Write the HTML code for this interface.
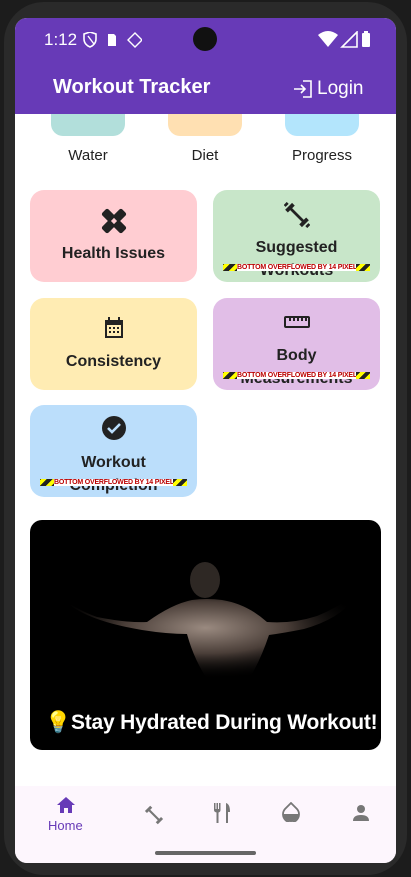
<!DOCTYPE html>
<html><head><meta charset="utf-8"><style>
*{margin:0;padding:0;box-sizing:border-box}
body{width:411px;height:877px;background:#1c1c1c;position:relative;overflow:hidden;font-family:"Liberation Sans",sans-serif}
.abs{position:absolute}
.screen{left:15px;top:18px;width:381px;height:845px;background:#fff;border-radius:12px;overflow:hidden}
.card{position:absolute;border-radius:14px;overflow:hidden;text-align:center;color:#222;font-weight:bold;font-size:16px}
.card svg{position:absolute;left:50%;transform:translateX(-50%)}
.lbl{position:absolute;left:0;right:0;text-align:center}
.of{position:absolute;height:7px;left:10px;right:10px;background:repeating-linear-gradient(-45deg,#ff0 0 4px,#222 4px 8px)}
.of span{position:absolute;left:14px;right:14px;top:0;height:7px;background:#fff;color:#b00;font-size:7px;line-height:7px;font-weight:bold;white-space:nowrap;overflow:hidden;font-family:"Liberation Sans Narrow","Liberation Sans",sans-serif;letter-spacing:-0.2px;text-align:center}
.tl{position:absolute;font-size:15px;color:#222;text-align:center;width:100px}
</style></head><body>
<div class="abs" style="left:4px;top:2px;width:403px;height:873px;border-radius:40px;background:#2a2a2a"></div>
<div class="abs screen">
 <div class="abs" style="left:0;top:0;width:381px;height:96px;background:#673ab7"></div>
 <div class="abs" style="left:29px;top:12px;color:#fff;font-size:17px">1:12</div>
 <svg class="abs" style="left:67px;top:14px" width="60" height="16" viewBox="0 0 60 16"><path d="M2 2l6-2 6 2v5c0 4-3 7-6 8-3-1-6-4-6-8z" fill="none" stroke="#fff" stroke-width="1.6"/><path d="M6 4l6 8" stroke="#fff" stroke-width="1.4"/><path d="M26 2h6l2 2v10h-8z" fill="#fff"/><path d="M53 1l7 7-7 7-7-7z" fill="none" stroke="#fff" stroke-width="1.4"/></svg>
 <div class="abs" style="left:178px;top:9px;width:24px;height:24px;border-radius:50%;background:#111"></div>
 <svg class="abs" style="left:303px;top:13px" width="66" height="18" viewBox="0 0 66 18"><path d="M0 4q10-8 20 0l-10 12z" fill="#fff"/><path d="M24 16h15V1z" fill="none" stroke="#fff" stroke-width="1.6"/><rect x="44" y="2" width="8" height="14" rx="1" fill="#fff"/><rect x="46" y="0" width="4" height="2" fill="#fff"/></svg>
 <div class="abs" style="left:38px;top:58px;color:#fff;font-size:20px;font-weight:bold">Workout Tracker</div>
 <svg class="abs" style="left:278px;top:62px" width="20" height="18" viewBox="0 0 20 18" fill="none" stroke="#fff" stroke-width="1.6"><path d="M1 9h11M8 5l4 4-4 4M10 1h8v16h-8"/></svg>
 <div class="abs" style="left:302px;top:60px;color:#fff;font-size:19px">Login</div>
 <div class="abs" style="left:36px;top:96px;width:74px;height:22px;background:#b2dfdb;border-radius:0 0 12px 12px"></div>
 <div class="abs" style="left:153px;top:96px;width:74px;height:22px;background:#ffe0b2;border-radius:0 0 12px 12px"></div>
 <div class="abs" style="left:270px;top:96px;width:74px;height:22px;background:#b3e5fc;border-radius:0 0 12px 12px"></div>
 <div class="tl" style="left:23px;top:129px">Water</div>
 <div class="tl" style="left:140px;top:129px">Diet</div>
 <div class="tl" style="left:257px;top:129px">Progress</div>

 <div class="card" style="left:15px;top:172px;width:167px;height:92px;background:#ffcdd2">
  <svg style="top:18px" width="26" height="26" viewBox="0 0 24 24" fill="#222"><rect x="8" y="-1" width="8" height="26" rx="2" transform="rotate(45 12 12)"/><rect x="8" y="-1" width="8" height="26" rx="2" transform="rotate(-45 12 12)"/><rect x="10" y="10" width="4" height="4" fill="#ffcdd2" transform="rotate(45 12 12)"/></svg>
  <div class="lbl" style="top:55px">Health Issues</div></div>
 <div class="card" style="left:198px;top:172px;width:167px;height:92px;background:#c8e6c9">
  <svg style="top:12px" width="26" height="26" viewBox="0 0 24 24" fill="#222"><path d="M6 6l12 12" stroke="#222" stroke-width="2.5"/><rect x="1" y="3.5" width="9" height="3.5" transform="rotate(-45 5.5 5.25)"/><rect x="14" y="17" width="9" height="3.5" transform="rotate(-45 18.5 18.75)"/><rect x="0" y="1" width="4" height="2.5" transform="rotate(-45 2 2.25)"/><rect x="20" y="20.5" width="4" height="2.5" transform="rotate(-45 22 21.75)"/></svg>
  <div class="lbl" style="top:49px">Suggested</div><div class="lbl" style="top:72px">Workouts</div>
  <div class="of" style="top:74px"><span>BOTTOM OVERFLOWED BY 14 PIXELS</span></div></div>
 <div class="card" style="left:15px;top:280px;width:167px;height:92px;background:#ffecb3">
  <svg style="top:18px" width="24" height="24" viewBox="0 0 24 24" fill="#222"><path d="M3 4h18v18H3z"/><rect x="6" y="1" width="2" height="4"/><rect x="16" y="1" width="2" height="4"/><rect x="5" y="9" width="14" height="11" fill="#ffecb3"/><g fill="#222"><rect x="7" y="11" width="2" height="2"/><rect x="11" y="11" width="2" height="2"/><rect x="15" y="11" width="2" height="2"/><rect x="7" y="15" width="2" height="2"/><rect x="11" y="15" width="2" height="2"/><rect x="15" y="15" width="2" height="2"/></g></svg>
  <div class="lbl" style="top:55px">Consistency</div></div>
 <div class="card" style="left:198px;top:280px;width:167px;height:92px;background:#e1bee7">
  <svg style="top:12px" width="28" height="24" viewBox="0 0 28 24" fill="none" stroke="#222" stroke-width="2"><rect x="2" y="7" width="24" height="10" rx="1"/><path d="M7 7v4M11 7v4M15 7v4M19 7v4M23 7v4"/></svg>
  <div class="lbl" style="top:49px">Body</div><div class="lbl" style="top:72px">Measurements</div>
  <div class="of" style="top:74px"><span>BOTTOM OVERFLOWED BY 14 PIXELS</span></div></div>
 <div class="card" style="left:15px;top:387px;width:167px;height:92px;background:#bbdefb">
  <svg style="top:11px" width="24" height="24" viewBox="0 0 24 24"><circle cx="12" cy="12" r="12" fill="#222"/><path d="M6 12l4 4 8-8" fill="none" stroke="#bbdefb" stroke-width="2.6"/></svg>
  <div class="lbl" style="top:49px">Workout</div><div class="lbl" style="top:72px">Completion</div>
  <div class="of" style="top:74px"><span>BOTTOM OVERFLOWED BY 14 PIXELS</span></div></div>

 <div class="abs" style="left:15px;top:502px;width:351px;height:230px;background:#000;border-radius:12px;overflow:hidden">
  <svg width="351" height="230" viewBox="0 0 351 230"><defs><radialGradient id="g" cx="0.5" cy="0.35" r="0.55"><stop offset="0" stop-color="#9a8a80"/><stop offset="0.5" stop-color="#4a3e38"/><stop offset="1" stop-color="#000" stop-opacity="0"/></radialGradient></defs>
  <ellipse cx="175" cy="60" rx="15" ry="18" fill="#2e2824"/>
  <path d="M27 75q20 15 40 22q30 6 50 5q25-18 45-22q15-2 30 0q25 4 45 22q25 2 50-6q20-8 35-20l2 3q-15 20-50 30q-20 4-35 6q-10 30-25 52q-20 5-35-5q-15-22-22-48q-20 0-45-4q-60-10-80-32z" fill="url(#g)"/>
  </svg>
  <div class="abs" style="left:15px;top:186px;color:#fff;font-size:21px;font-weight:bold;white-space:nowrap;letter-spacing:-0.2px"><span style="font-family:'Noto Sans CJK SC',sans-serif">💡</span>Stay Hydrated During Workout!</div>
 </div>

 <div class="abs" style="left:0;top:768px;width:381px;height:77px;background:#fdf6fd"></div>
 <svg class="abs" style="left:42px;top:779px" width="18" height="16" viewBox="0 0 18 16" fill="#673ab7"><path d="M9 0l9 8h-3v8h-4v-5H7v5H3V8H0z"/></svg>
 <div class="abs" style="left:33px;top:800px;color:#673ab7;font-size:13px">Home</div>
 <svg class="abs" style="left:129px;top:787px" width="20" height="20" viewBox="0 0 24 24" fill="#777"><path d="M6 6l12 12" stroke="#777" stroke-width="2.5"/><rect x="1" y="3.5" width="9" height="3.5" transform="rotate(-45 5.5 5.25)"/><rect x="14" y="17" width="9" height="3.5" transform="rotate(-45 18.5 18.75)"/></svg>
 <svg class="abs" style="left:198px;top:785px" width="20" height="20" viewBox="0 0 20 20" fill="#777"><path d="M1 0h1.5v6h1V0h1.5v6h1V0H7.5v7q0 2-2 2.5V20H3.5V9.5Q1 9 1 7z"/><path d="M13 0q4 1 4 9h-2v11h-2z"/></svg>
 <svg class="abs" style="left:267px;top:784px" width="18" height="20" viewBox="0 0 18 20"><path d="M9 1l6 6a8 8 0 1 1-12 0z" fill="none" stroke="#777" stroke-width="1.8"/><path d="M1.5 12h15a7.5 7.5 0 0 1-15 0z" fill="#777"/></svg>
 <svg class="abs" style="left:337px;top:786px" width="18" height="18" viewBox="0 0 18 18" fill="#777"><circle cx="9" cy="5" r="4"/><path d="M1 17q0-6 8-6t8 6z"/></svg>
 <div class="abs" style="left:140px;top:833px;width:101px;height:4px;border-radius:2px;background:#666"></div>
</div>
</body></html>
